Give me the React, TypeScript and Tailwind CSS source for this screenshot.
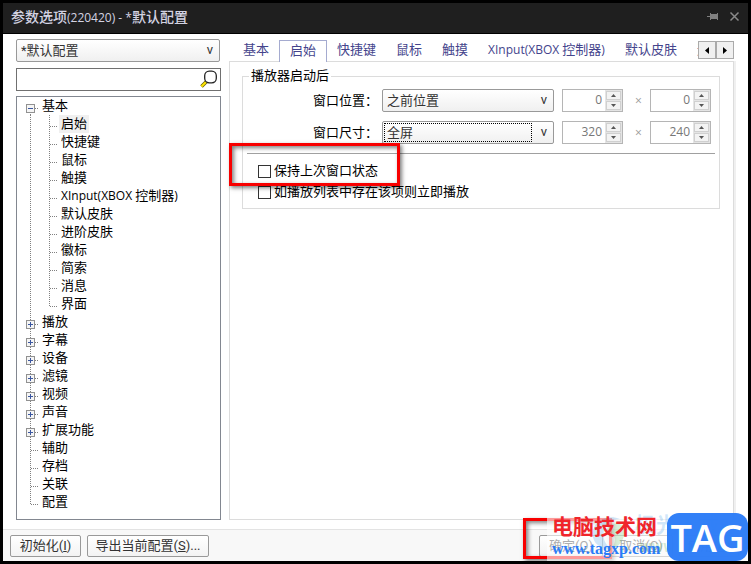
import { useState } from 'react';

interface TreeNode {
  label: string;
  open?: boolean;
  expandable?: boolean;
  children?: string[];
}

const TREE: TreeNode[] = [
  {
    label: '基本',
    open: true,
    expandable: true,
    children: [
      '启始', '快捷键', '鼠标', '触摸', 'XInput(XBOX 控制器)', '默认皮肤',
      '进阶皮肤', '徽标', '简索', '消息', '界面',
    ],
  },
  { label: '播放', expandable: true },
  { label: '字幕', expandable: true },
  { label: '设备', expandable: true },
  { label: '滤镜', expandable: true },
  { label: '视频', expandable: true },
  { label: '声音', expandable: true },
  { label: '扩展功能', expandable: true },
  { label: '辅助' },
  { label: '存档' },
  { label: '关联' },
  { label: '配置' },
];

const TABS = ['基本', '启始', '快捷键', '鼠标', '触摸', 'XInput(XBOX 控制器)', '默认皮肤', '进阶皮肤'];

// Latin runs are set one step smaller than the Chinese around them
function Mixed({ text }: { text: string }) {
  return text.split(/([\x20-\x7e]+)/).filter(Boolean).map((part, i) =>
    part.charCodeAt(0) < 128 ? (
      <span key={i} className="font-['Open_Sans',sans-serif] text-[12px] leading-none whitespace-pre">{part}</span>
    ) : (
      part
    )
  );
}

function TitleBar() {
  return (
    <header className="flex h-[31px] shrink-0 items-center justify-between border-b border-black bg-[#1f1f1f] pt-px pr-[7px] pb-1 pl-2 text-[#d3d3e2]">
      <h1 className="text-sm font-medium leading-5 whitespace-nowrap">
        <Mixed text="参数选项(220420) - *默认配置" />
      </h1>
      <div className="flex gap-2">
        <button type="button" aria-label="置顶">
          <svg width="14" height="13" viewBox="0 0 14 13" fill="#808080" shapeRendering="crispEdges">
            <path d="M1 6h4v1H1zM4 3h1v7H4zM5 4h6v5H5zM11 3h1v7h-1z" />
          </svg>
        </button>
        <button type="button" aria-label="关闭">
          <svg width="13" height="13" viewBox="0 0 13 13" stroke="#8a8a8a" strokeWidth="1.5">
            <path d="M2.500 2.500l8 8M10.500 2.500l-8 8" />
          </svg>
        </button>
      </div>
    </header>
  );
}

interface DropdownProps {
  id: string;
  label?: string;
  options: string[];
  focused?: boolean;
}

function Dropdown({ id, label, options, focused }: DropdownProps) {
  return (
    <div className="relative min-w-0 flex-1">
      <select
        id={id}
        aria-label={label}
        className="block h-[23px] w-full appearance-none rounded-xs border border-[#999] bg-linear-to-b from-white to-[#f0f0f0] px-1 text-[13px] leading-5 text-[#333] outline-none"
      >
        {options.map((o) => (
          <option key={o}>{o}</option>
        ))}
      </select>
      {focused && (
        <span className="pointer-events-none absolute top-0.5 right-[22px] bottom-0.5 left-0.5 border border-dotted border-black" />
      )}
      <span className="pointer-events-none absolute top-px right-[7px] text-[13px] leading-5 text-[#333]">v</span>
    </div>
  );
}

function Spinner({ label, value }: { label: string; value: number }) {
  return (
    <div className="flex h-[23px] w-[61px] shrink-0 border border-[#b5b5b5] bg-white">
      <input
        aria-label={label}
        defaultValue={value}
        disabled
        className="w-0 min-w-0 flex-1 bg-white pr-[3px] pb-px text-right font-['Open_Sans',sans-serif] text-xs text-[#777]"
      />
      <div className="flex w-[17px] flex-col gap-px bg-[#e4e4e4] p-px">
        <button type="button" aria-label="增加" disabled className="flex flex-1 items-center justify-center border border-[#d0d0d0] bg-[#f3f3f3]">
          <svg width="5" height="3" viewBox="0 0 5 3" fill="#555"><path d="M0 3L2.500 0L5 3z" /></svg>
        </button>
        <button type="button" aria-label="减少" disabled className="flex flex-1 items-center justify-center border border-[#d0d0d0] bg-[#f3f3f3]">
          <svg width="5" height="3" viewBox="0 0 5 3" fill="#555"><path d="M0 0L2.500 3L5 0z" /></svg>
        </button>
      </div>
    </div>
  );
}

function ExpandBox({ open }: { open?: boolean }) {
  return (
    <svg width="9" height="9" viewBox="0 0 9 9" shapeRendering="crispEdges" className="absolute top-[7px] left-0">
      <rect x="0.500" y="0.500" width="8" height="8" rx="1" fill="#f5f5f5" stroke="#919191" />
      <path d={open ? 'M2 4h5v1H2z' : 'M2 4h5v1H2zM4 2h1v5H4z'} fill="#3b57a0" />
    </svg>
  );
}

// vertical + horizontal connector in front of a row
function Connector({ last, first }: { last?: boolean; first?: boolean }) {
  return (
    <svg width="14" height="18" viewBox="0 0 14 18" shapeRendering="crispEdges" stroke="#808080" strokeDasharray="1 1" className="shrink-0">
      <path d={`M4.500 ${first ? 11 : 0}V${last ? 11 : 18}M5 11.500H13`} />
    </svg>
  );
}

function Tree() {
  const [selected, setSelected] = useState('启始');

  return (
    <ul className="flex-1 border border-[#828790] bg-white pl-[9px] text-[13px] leading-[18px] text-black">
      {TREE.map((node, i) => (
        <li key={node.label}>
          <div className="relative flex">
            <Connector first={i === 0} last={i === TREE.length - 1} />
            {node.expandable && <ExpandBox open={node.open} />}
            <button type="button" className="px-0.5">{node.label}</button>
          </div>
          {node.children && (
            <ul>
              {node.children.map((child, j) => (
                <li key={child} className="flex">
                  <svg width="19" height="18" viewBox="0 0 19 18" shapeRendering="crispEdges" stroke="#808080" strokeDasharray="1 1" className="shrink-0">
                    <path d="M4.500 0V18" />
                  </svg>
                  <Connector last={j === node.children!.length - 1} />
                  <button
                    type="button"
                    onClick={() => setSelected(child)}
                    className={child === selected ? 'bg-[#f0f0f0] px-0.5' : 'px-0.5'}
                  >
                    <Mixed text={child} />
                  </button>
                </li>
              ))}
            </ul>
          )}
        </li>
      ))}
    </ul>
  );
}

function Sidebar() {
  return (
    <aside className="flex w-[205px] shrink-0 flex-col">
      <div className="flex pr-px">
        <Dropdown id="profile" label="配置" options={['*默认配置']} />
      </div>
      <div className="relative mt-1.5 mb-[5px]">
        <input aria-label="搜索" className="block h-[23px] w-full border border-[#707070] bg-white px-1 text-[13px] outline-none" />
        <svg width="18" height="18" viewBox="0 0 18 18" fill="none" className="absolute top-0.5 right-[3px]">
          <path d="M1.500 16.500L6 12" stroke="#6e6200" strokeWidth="3.500" />
          <path d="M1.500 16.500L6 12" stroke="#ffe600" strokeWidth="2" />
          <rect x="4.700" y="1.200" width="11.600" height="11.600" rx="4.500" fill="#fff" stroke="#222" strokeWidth="1.300" />
        </svg>
      </div>
      <Tree />
    </aside>
  );
}

function StartupPanel() {
  return (
    <fieldset className="relative mr-[13px] ml-3 border border-[#dcdcdc] px-1 pb-1.5 text-[13px] text-black">
      <legend className="ml-0.5 px-0.5 leading-5">播放器启动后</legend>
      <div className="flex flex-col gap-[9px] pt-[3px] pr-1">
        <div className="flex items-center">
          <label htmlFor="position" className="w-[135px] shrink-0 pr-1 text-right">窗口位置：</label>
          <Dropdown id="position" options={['之前位置']} />
          <div className="ml-2 flex items-center">
            <Spinner label="横向位置" value={0} />
            <span className="w-[27px] pl-1 text-center font-['Open_Sans',sans-serif] text-xs text-[#999]">×</span>
            <Spinner label="纵向位置" value={0} />
          </div>
        </div>
        <div className="flex items-center">
          <label htmlFor="size" className="w-[135px] shrink-0 pr-1 text-right">窗口尺寸：</label>
          <Dropdown id="size" options={['全屏']} focused />
          <div className="ml-2 flex items-center">
            <Spinner label="宽度" value={320} />
            <span className="w-[27px] pl-1 text-center font-['Open_Sans',sans-serif] text-xs text-[#999]">×</span>
            <Spinner label="高度" value={240} />
          </div>
        </div>
      </div>
      <hr className="mt-[9px] border-[#a0a0a0]" />
      <div className="mt-[7px] flex flex-col gap-px pl-[11px] leading-5">
        <label className="flex items-center gap-[3px]">
          <input type="checkbox" className="size-[13px] appearance-none border border-[#333] bg-white" />
          保持上次窗口状态
        </label>
        <label className="flex items-center gap-[3px]">
          <input type="checkbox" className="size-[13px] appearance-none border border-[#333] bg-white" />
          如播放列表中存在该项则立即播放
        </label>
      </div>
      <div className="pointer-events-none absolute bottom-[22px] -left-3.5 h-[43px] w-[171px] border-3 border-[#f80000] shadow-[2px_2px_4px_rgba(0,0,0,0.5),inset_2px_2px_4px_rgba(0,0,0,0.5)]" />
    </fieldset>
  );
}

function Settings() {
  const [active, setActive] = useState('启始');

  return (
    <section className="flex min-w-0 flex-1 flex-col">
      <div className="relative h-[22px]">
        <div className="mr-9 flex h-[23px] overflow-hidden pt-px pl-1 text-[13px] leading-[18px] whitespace-nowrap text-[#44448c]">
          {TABS.map((tab) => (
            <button
              key={tab}
              type="button"
              onClick={() => setActive(tab)}
              className={
                tab === active
                  ? 'relative z-10 h-[22px] shrink-0 border border-b-0 border-[#a5abd0] bg-white px-2.5 pb-px'
                  : 'h-[22px] shrink-0 px-2.5 pb-[3px]'
              }
            >
              <Mixed text={tab} />
            </button>
          ))}
        </div>
        <div className="absolute top-0.5 right-0 flex bg-white">
          <button type="button" aria-label="向左" className="flex h-[18px] w-[18px] items-center justify-center border border-[#aaa] bg-[#f0f0f0]">
            <svg width="4" height="7" viewBox="0 0 4 7"><path d="M4 0L0 3.500L4 7z" /></svg>
          </button>
          <button type="button" aria-label="向右" className="flex h-[18px] w-[18px] items-center justify-center border border-[#aaa] bg-[#f0f0f0]">
            <svg width="4" height="7" viewBox="0 0 4 7"><path d="M0 0L4 3.500L0 7z" /></svg>
          </button>
        </div>
      </div>
      <div className="flex-1 border border-[#dcdcdc] pt-1 shadow-[2px_0_0_#f0f0f0]">
        <StartupPanel />
      </div>
    </section>
  );
}

function Watermark() {
  return (
    <div className="pointer-events-none absolute right-0 bottom-0 flex h-12 w-[201px] items-center bg-white/60">
      <svg width="36" height="38" viewBox="0 0 36 38" className="absolute top-0.5 left-[44px] opacity-25">
        <path d="M2 16C4 5 17-1 29 4C20 4 15 8 13 15C11 23 14 29 20 34C8 34 0 27 2 16z" fill="#4a9fe8" />
        <path d="M15 17C17 8 26 6 34 12C34 23 30 32 20 34C26 27 26 19 15 17z" fill="#6cc06c" />
      </svg>
      <div className="absolute top-0 right-2 text-right whitespace-nowrap">
        <div className="text-[21px] leading-6 font-bold text-[#4a9fe8]/25">极光下载站</div>
        <div className="text-base leading-5 font-bold text-[#5bb35b]/25">www.xz7.com</div>
      </div>
      <div className="relative flex-1 pl-[5px] whitespace-nowrap">
        <div className="font-['Noto_Sans_CJK_SC',sans-serif] text-[21px] leading-6 font-bold text-[#f0252b]">电脑技术网</div>
        <div className="font-['Liberation_Serif',serif] text-base leading-6 font-bold text-[#2b7cf7]">www.tagxp.com</div>
      </div>
      <div className="relative flex h-12 w-[81px] items-center justify-center rounded-xl bg-[#2b7cf7]/97 font-['Open_Sans',sans-serif] text-[38px] font-semibold text-white">
        TAG
      </div>
    </div>
  );
}

function Footer() {
  const btn = 'h-[22px] rounded-xs border border-[#999] bg-linear-to-b from-white to-[#f3f3f3] pb-px text-[13px] leading-5 text-[#333]';
  return (
    <footer className="relative flex h-8 shrink-0 items-center justify-between border-t border-[#e3e3e3] bg-[#f8f8f8] pr-[9px] pl-[7px]">
      <div className="flex gap-1.5">
        <button type="button" className={`${btn} w-[71px]`}>初始化(<u>I</u>)</button>
        <button type="button" className={`${btn} w-[122px]`}>导出当前配置(<u>S</u>)...</button>
      </div>
      <div className="flex gap-1.5">
        <button type="button" className={`${btn} w-[64px]`}>确定(<u>O</u>)</button>
        <button type="button" className={`${btn} w-[64px]`}>取消(<u>C</u>)</button>
        <button type="button" className={`${btn} w-[60px]`}>应用(<u>A</u>)</button>
      </div>
      <div className="pointer-events-none absolute right-[136px] bottom-0.5 h-[41px] w-[89px] border-3 border-[#f80000] shadow-[2px_2px_4px_rgba(0,0,0,0.5),inset_2px_2px_4px_rgba(0,0,0,0.5)]" />
      <Watermark />
    </footer>
  );
}

export default function App() {
  return (
    <div className="flex min-h-screen flex-col border-3 border-black bg-white font-[Roboto,'Noto_Sans_CJK_SC',sans-serif]">
      <TitleBar />
      <main className="flex flex-1 gap-2 pt-[5px] pr-3.5 pb-[9px] pl-[13px]">
        <Sidebar />
        <Settings />
      </main>
      <Footer />
    </div>
  );
}
